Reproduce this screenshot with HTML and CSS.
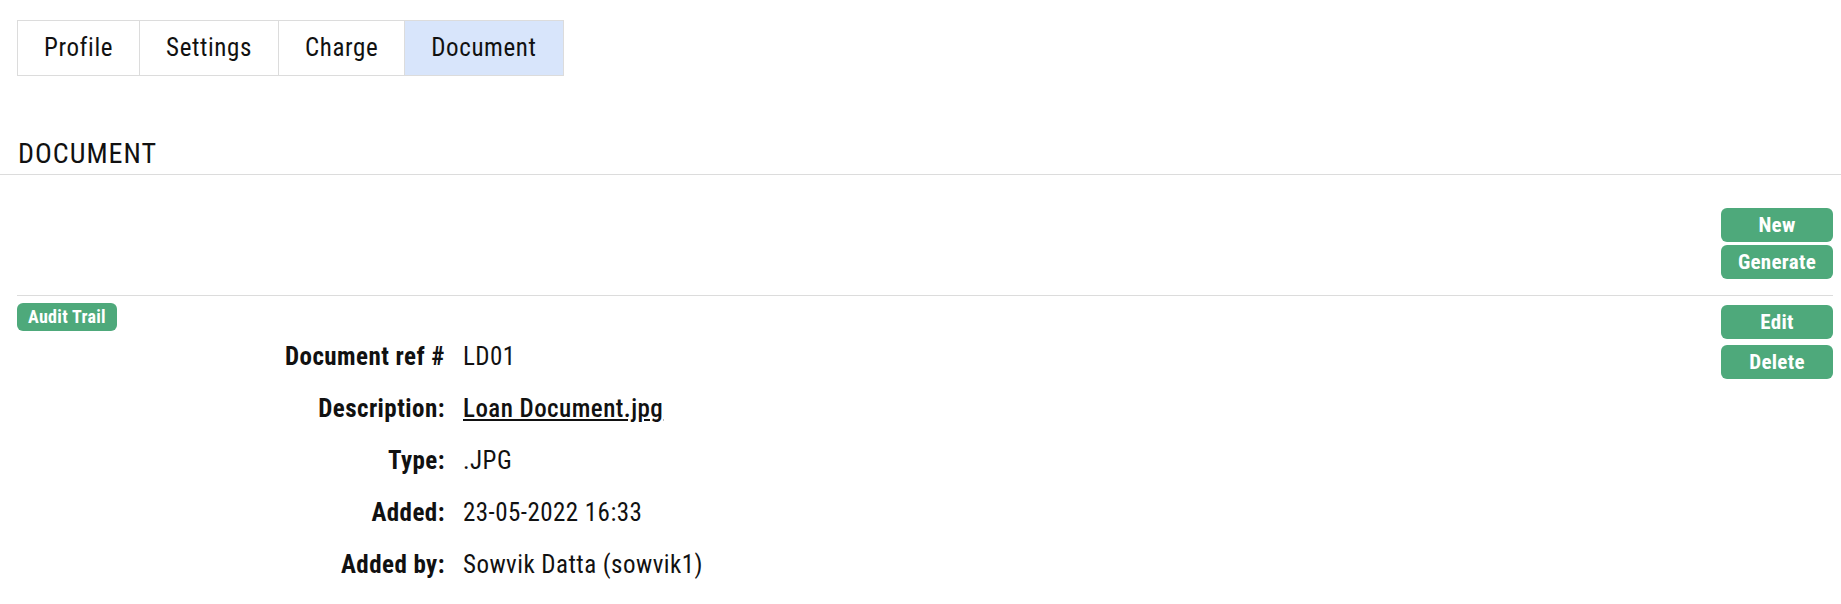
FILE: index.html
```html
<!DOCTYPE html>
<html>
<head>
<meta charset="utf-8">
<title>Document</title>
<link rel="stylesheet" href="styles.css">
</head>
<body>
<div class="page">
  <nav class="tabs">
    <a class="tab" href="#">Profile</a>
    <a class="tab" href="#">Settings</a>
    <a class="tab" href="#">Charge</a>
    <a class="tab active" href="#">Document</a>
  </nav>

  <h2 class="section-title">DOCUMENT</h2>

  <div class="toolbar">
    <div class="btn-stack">
      <button class="btn">New</button>
      <button class="btn">Generate</button>
    </div>
  </div>

  <div class="record">
    <div class="record-main">
      <button class="badge-btn">Audit Trail</button>
      <dl class="details">
        <dt>Document ref #</dt><dd>LD01</dd>
        <dt>Description:</dt><dd><a class="doc-link" href="#">Loan Document.jpg</a></dd>
        <dt>Type:</dt><dd>.JPG</dd>
        <dt>Added:</dt><dd>23-05-2022 16:33</dd>
        <dt>Added by:</dt><dd>Sowvik Datta (sowvik1)</dd>
      </dl>
    </div>
    <div class="btn-stack">
      <button class="btn">Edit</button>
      <button class="btn">Delete</button>
    </div>
  </div>
</div>
</body>
</html>
```
FILE: styles.css
```css
* { box-sizing: border-box; }

body {
  margin: 0;
  background: #fff;
  color: #111;
  font-family: Roboto, "Noto Sans", sans-serif;
  font-stretch: 87.5%;
}

.page {
  padding-top: 20px;
}

.tabs {
  display: inline-flex;
  margin-left: 17px;
  border: 1px solid #dcdcdc;
}

.tab {
  display: block;
  height: 54px;
  line-height: 54px;
  padding: 0 26px;
  font-size: 25px;
  letter-spacing: 0.6px;
  color: #111;
  text-decoration: none;
  border-left: 1px solid #dcdcdc;
}

.tab:first-child { border-left: 0; }

.tab.active { background: #d8e5fb; }

.section-title {
  margin: 62px 0 0;
  padding: 0 0 4px 18px;
  font-size: 28px;
  line-height: 32px;
  font-weight: 400;
  letter-spacing: 1px;
  border-bottom: 1px solid #dcdcdc;
}

.toolbar {
  display: flex;
  justify-content: flex-end;
  margin: 0 8px 0 17px;
  padding: 33px 0 16px;
  border-bottom: 1px solid #dcdcdc;
}

.btn-stack {
  display: flex;
  flex-direction: column;
  gap: 3px;
}

.btn {
  width: 112px;
  height: 34px;
  border: 0;
  border-radius: 6px;
  background: #4ea97b;
  color: #fff;
  font-family: inherit;
  font-stretch: 87.5%;
  font-size: 21px;
  font-weight: 700;
  letter-spacing: 0.3px;
  line-height: 34px;
  padding: 0;
  cursor: pointer;
}

.record {
  display: flex;
  justify-content: space-between;
  align-items: flex-start;
  margin: 0 8px 0 17px;
  padding-top: 7px;
}

.record .btn-stack { margin-top: 2px; gap: 6px; }

.badge-btn {
  display: block;
  height: 28px;
  padding: 0 11px;
  border: 0;
  border-radius: 6px;
  background: #4ea97b;
  color: #fff;
  font-family: inherit;
  font-stretch: 87.5%;
  font-size: 18px;
  font-weight: 700;
  letter-spacing: 0.3px;
  line-height: 28px;
  cursor: pointer;
}

.details {
  display: grid;
  grid-template-columns: 428px auto;
  column-gap: 18px;
  margin: 0;
  font-size: 25px;
  letter-spacing: 0.45px;
  line-height: 52px;
}

.details dt {
  text-align: right;
  font-weight: 700;
}

.details dd { margin: 0; }

.doc-link {
  color: #111;
  font-weight: 500;
  text-decoration: underline;
}
```
